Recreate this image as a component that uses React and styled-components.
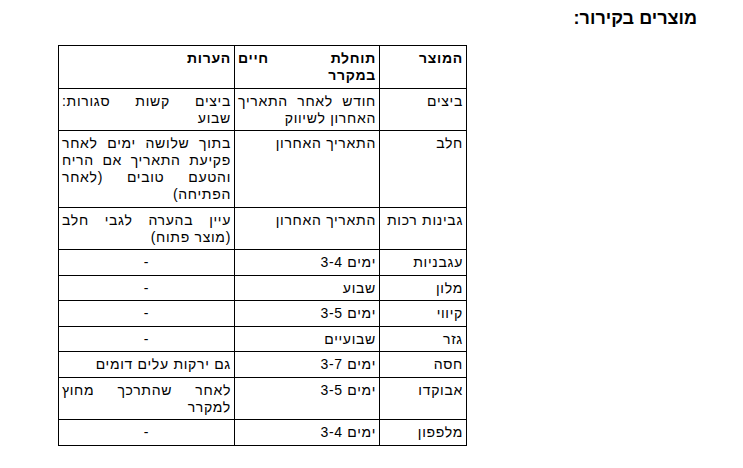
import React from "react";
import styled, { createGlobalStyle } from "styled-components";

const GlobalStyle = createGlobalStyle`
  html, body {
    margin: 0;
    padding: 0;
    background: #ffffff;
  }
  body {
    font-family: "Liberation Sans", "DejaVu Sans", sans-serif;
    color: #000000;
  }
`;

// note can be an array when the line break is fixed in the source
const rows = [
  { name: "ביצים", life: "חודש לאחר התאריך האחרון לשיווק", note: ["ביצים קשות סגורות:", "שבוע"] },
  { name: "חלב", life: "התאריך האחרון", note: "בתוך שלושה ימים לאחר פקיעת התאריך אם הריח והטעם טובים (לאחר הפתיחה)" },
  { name: "גבינות רכות", life: "התאריך האחרון", note: "עיין בהערה לגבי חלב (מוצר פתוח)" },
  { name: "עגבניות", life: "ימים 3-4", note: "-" },
  { name: "מלון", life: "שבוע", note: "-" },
  { name: "קיווי", life: "ימים 3-5", note: "-" },
  { name: "גזר", life: "שבועיים", note: "-" },
  { name: "חסה", life: "ימים 3-7", note: "גם ירקות עלים דומים" },
  { name: "אבוקדו", life: "ימים 3-5", note: "לאחר שהתרכך מחוץ למקרר" },
  { name: "מלפפון", life: "ימים 3-4", note: "-" },
];

const Page = styled.div`
  direction: rtl;
  width: 743px;
  min-height: 468px;
  box-sizing: border-box;
  padding: 8px 46px 0 0;
  display: flex;
  flex-direction: column;
  align-items: flex-start;
`;

const Title = styled.h2`
  margin: 0;
  font-size: 18px;
  font-weight: bold;
  line-height: 21px;
`;

const Table = styled.table`
  margin: 16px 230px 0 0;
  width: 408px;
  border-collapse: collapse;
  border: 1px solid #000000;
  table-layout: fixed;
  font-size: 14px;
  line-height: 17px;
  letter-spacing: 0.7px;
`;

const Th = styled.th`
  border: 1px solid #000000;
  padding: 4px 3px 3.5px;
  text-align: justify;
  text-align-last: ${(p) => (p.$spread ? "justify" : "right")};
  vertical-align: top;
  font-weight: bold;
`;

const Td = styled.td`
  border: 1px solid #000000;
  padding: 4px 3px 3.5px;
  vertical-align: top;
  text-align: ${(p) => (p.$center ? "center" : "justify")};
  text-align-last: ${(p) => (p.$center ? "center" : p.$spread ? "justify" : "right")};
  white-space: ${(p) => (p.$nowrap ? "nowrap" : "normal")};
`;

function Lines({ value }) {
  if (!Array.isArray(value)) return value;
  return value.map((line, i) => (
    <React.Fragment key={i}>
      {i > 0 && <br />}
      {line}
    </React.Fragment>
  ));
}

export default function App() {
  return (
    <>
      <GlobalStyle />
      <Page>
        <Title>מוצרים בקירור:</Title>
        <Table>
          <colgroup>
            <col style={{ width: "87px" }} />
            <col style={{ width: "145px" }} />
            <col style={{ width: "176px" }} />
          </colgroup>
          <thead>
            <tr>
              <Th>המוצר</Th>
              <Th $spread>
                תוחלת חיים
                <br />
                במקרר
              </Th>
              <Th>הערות</Th>
            </tr>
          </thead>
          <tbody>
            {rows.map((r) => (
              <tr key={r.name}>
                <Td $nowrap>{r.name}</Td>
                <Td>{r.life}</Td>
                <Td $center={r.note === "-"} $spread={Array.isArray(r.note)}>
                  <Lines value={r.note} />
                </Td>
              </tr>
            ))}
          </tbody>
        </Table>
      </Page>
    </>
  );
}
